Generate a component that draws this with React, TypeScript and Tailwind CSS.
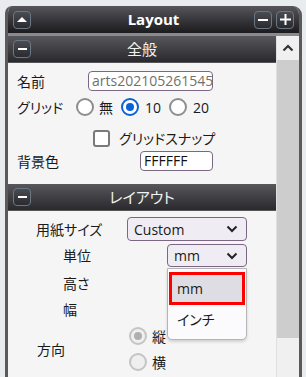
import React from "react";

const font = {
  fontFamily: '"Open Sans", "Noto Sans CJK JP", sans-serif',
  fontFeatureSettings: '"palt"',
};

function Radio({ checked, disabled }: { checked?: boolean; disabled?: boolean }) {
  if (disabled) {
    return (
      <span className="inline-flex h-[18px] w-[18px] items-center justify-center rounded-full border-2 border-[#c4c4c4] bg-[#efefef]">
        {checked && <span className="h-[8px] w-[8px] rounded-full bg-[#b0b0b0]" />}
      </span>
    );
  }
  if (checked) {
    return (
      <span className="inline-flex h-[18px] w-[18px] items-center justify-center rounded-full border-2 border-[#0a62d6] bg-white">
        <span className="h-[8px] w-[8px] rounded-full bg-[#0a62d6]" />
      </span>
    );
  }
  return <span className="inline-block h-[18px] w-[18px] rounded-full border-2 border-[#8d8d8d] bg-white" />;
}

function Chevron() {
  return (
    <svg width="12" height="8" viewBox="0 0 12 8" className="shrink-0">
      <path d="M1.5 1.5 L6 6 L10.5 1.5" fill="none" stroke="#222" strokeWidth="2" />
    </svg>
  );
}

function TitleBtn({ children }: { children: React.ReactNode }) {
  return (
    <span className="flex h-[18px] w-[18px] items-center justify-center rounded-[4px] border border-[#6a7786] bg-gradient-to-b from-[#4a4c52] to-[#2a2b30]">
      {children}
    </span>
  );
}

function SectionHeader({ title }: { title: string }) {
  return (
    <div className="relative flex h-[27px] items-center bg-gradient-to-b from-[#58575c] to-[#2a292e] border-b border-[#555]">
      <span className="ml-[5px]">
        <TitleBtn>
          <span className="h-[2px] w-[9px] bg-white" />
        </TitleBtn>
      </span>
      <span className="absolute left-0 right-0 text-center text-[15px] text-[#f2f2f2]">{title}</span>
    </div>
  );
}

export default function App() {
  return (
    <div className="h-[377px] w-[306px] overflow-hidden bg-[#e9ecef] pt-[6px] pl-[5px]" style={font}>
      <div className="h-[371px] w-[297px] overflow-hidden rounded-tl-[7px] rounded-tr-[9px] border-l-[3px] border-r-[3px] border-[#5a5a5a] bg-[#f5f5f5] flex flex-col">
        {/* title bar */}
        <div className="relative flex h-[27px] shrink-0 items-center bg-gradient-to-b from-[#56565b] to-[#1c1c1f] px-[5px]">
          <TitleBtn>
            <svg width="10" height="7" viewBox="0 0 10 7">
              <path d="M0 6 L5 1 L10 6 Z" fill="#fff" />
            </svg>
          </TitleBtn>
          <span className="absolute left-0 right-0 text-center text-[15px] font-bold text-white">
            Layout
          </span>
          <span className="ml-auto flex gap-[4px]">
            <TitleBtn>
              <span className="h-[2px] w-[10px] bg-white" />
            </TitleBtn>
            <TitleBtn>
              <svg width="11" height="11" viewBox="0 0 11 11">
                <path d="M5.5 0 V11 M0 5.5 H11" stroke="#fff" strokeWidth="2" />
              </svg>
            </TitleBtn>
          </span>
        </div>
        <div className="h-[3px] shrink-0 bg-[#8a8a8c]" />
        <div className="flex flex-1">
          {/* main */}
          <div className="relative w-[268px] text-[14px] text-[#1a1a1a]">
            <SectionHeader title="全般" />
            <div className="pl-[9px]">
              <div className="mt-[8px] flex h-[20px] items-center">
                <span className="w-[71px]">名前</span>
                <div className="h-[20px] w-[125px] overflow-hidden whitespace-nowrap rounded-[4px] border border-[#7b6783] bg-white px-[3px] text-[14px] leading-[18px] text-[#707070]">
                  arts20210526154552
                </div>
              </div>
              <div className="mt-[4px] flex h-[24px] items-center">
                <span className="w-[59px]">グリッド</span>
                <Radio />
                <span className="ml-[5px] mr-[8px]">無</span>
                <Radio checked />
                <span className="ml-[6px] mr-[8px]">10</span>
                <Radio />
                <span className="ml-[6px]">20</span>
              </div>
              <div className="mt-[10px] flex h-[18px] items-center pl-[76px]">
                <span className="inline-block h-[17px] w-[17px] rounded-[3px] border-2 border-[#7a7a7a] bg-white" />
                <span className="ml-[9px]">グリッドスナップ</span>
              </div>
              <div className="mt-[4px] flex h-[20px] items-center">
                <span className="w-[123px]">背景色</span>
                <div className="h-[20px] w-[73px] rounded-[4px] border border-[#7b6783] bg-white px-[3px] leading-[18px] text-[#111]">
                  FFFFFF
                </div>
              </div>
            </div>
            <div className="mt-[13px]">
              <SectionHeader title="レイアウト" />
            </div>
            <div>
              <div className="mt-[6px] flex h-[24px] items-center">
                <span className="w-[119px] pl-[28px]">用紙サイズ</span>
                <div className="flex h-[24px] w-[120px] items-center justify-between rounded-[4px] border border-[#7b6783] bg-[#efedf3] pl-[6px] pr-[8px]">
                  <span>Custom</span>
                  <Chevron />
                </div>
              </div>
              <div className="mt-[3px] flex h-[23px] items-center">
                <span className="w-[159px] pl-[55px]">単位</span>
                <div className="flex h-[23px] w-[80px] items-center justify-between rounded-[4px] border border-[#7b6783] bg-[#efedf3] pl-[6px] pr-[8px]">
                  <span>mm</span>
                  <Chevron />
                </div>
              </div>
              <div className="mt-[3px] flex h-[26px] items-center pl-[55px]">高さ</div>
              <div className="flex h-[26px] items-center pl-[55px]">幅</div>
              <div className="mt-[5px] flex h-[44px] items-center">
                <span className="w-[121px] pl-[29px]">方向</span>
                <div className="flex flex-col gap-[8px]">
                  <div className="flex h-[18px] items-center">
                    <Radio checked disabled />
                    <span className="ml-[5px]">縦</span>
                  </div>
                  <div className="flex h-[18px] items-center">
                    <Radio disabled />
                    <span className="ml-[5px]">横</span>
                  </div>
                </div>
              </div>
            </div>
            {/* dropdown overlay */}
            <div className="absolute left-[159px] top-[232px] w-[80px] rounded-b-[5px] border border-[#b5b5b5] bg-[#fbfbfd] px-[1px] pb-[8px] pt-[3px] shadow-[0_2px_3px_rgba(0,0,0,0.15)]">
              <div className="flex h-[33px] items-center border-[3px] border-[#ff0000] bg-[#dedde3] pl-[5px]">mm</div>
              <div className="flex h-[26px] items-center pl-[8px] pt-[3px]">インチ</div>
            </div>
          </div>
          {/* scrollbar */}
          <div className="flex w-[23px] flex-col bg-[#f0f0f0] border-l border-[#e0e0e0]">
            <div className="flex h-[24px] items-center justify-center">
              <svg width="12" height="8" viewBox="0 0 12 8">
                <path d="M1.5 6.5 L6 2 L10.5 6.5" fill="none" stroke="#333" strokeWidth="2.2" />
              </svg>
            </div>
            <div className="h-[278px] bg-[#cdcdcd]" />
          </div>
        </div>
      </div>
    </div>
  );
}
